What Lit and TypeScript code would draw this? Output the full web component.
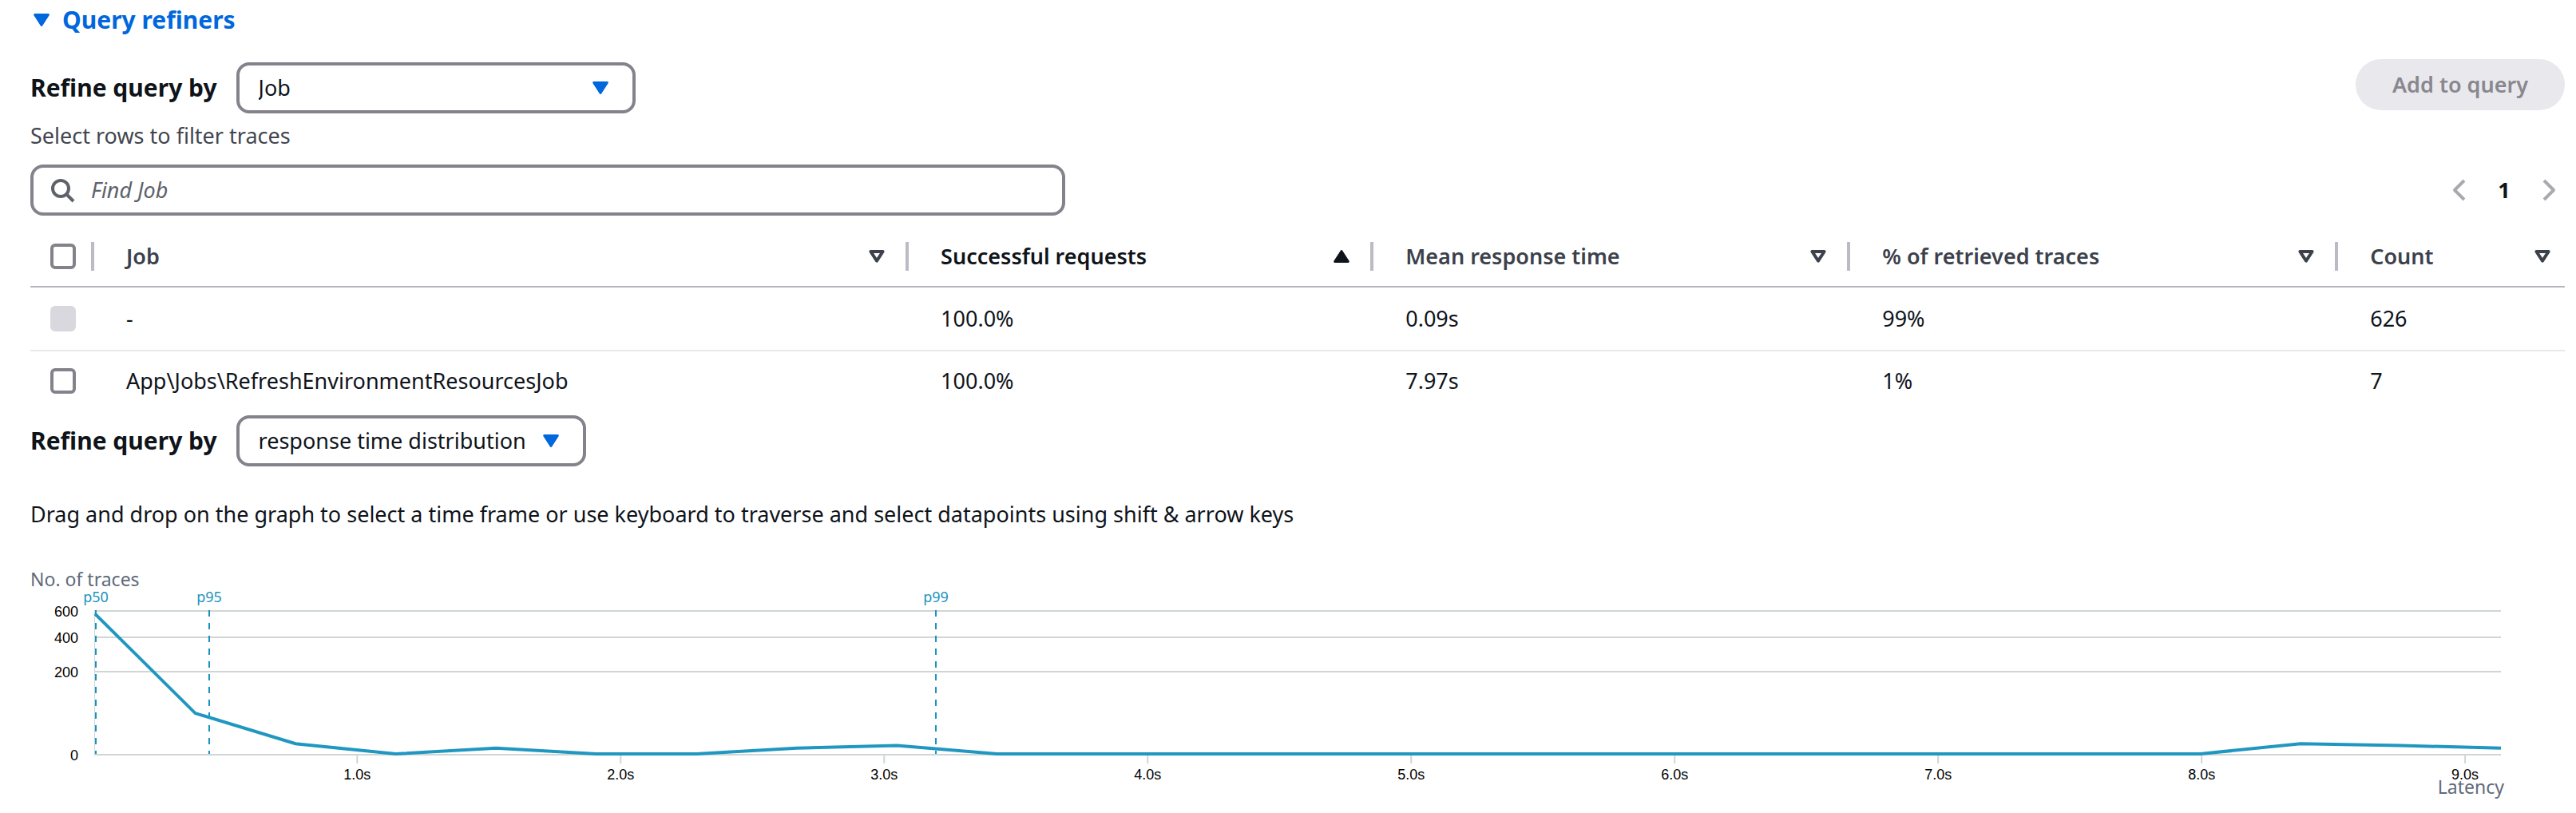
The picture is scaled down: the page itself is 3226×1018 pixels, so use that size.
import { LitElement, html, svg, css } from "lit";
import { customElement, property, state } from "lit/decorators.js";
import { classMap } from "lit/directives/class-map.js";

type SortDirection = "none" | "ascending";

interface Column {
  key: keyof JobRow;
  label: string;
  width: string;
  sort: SortDirection;
}

interface JobRow {
  job: string;
  success: string;
  mean: string;
  share: string;
  count: string;
  disabled: boolean;
}

const COLUMNS: Column[] = [
  { key: "job", label: "Job", width: "32.14%", sort: "none" },
  { key: "success", label: "Successful requests", width: "18.34%", sort: "ascending" },
  { key: "mean", label: "Mean response time", width: "18.81%", sort: "none" },
  { key: "share", label: "% of retrieved traces", width: "19.25%", sort: "none" },
  { key: "count", label: "Count", width: "auto", sort: "none" },
];

const ROWS: JobRow[] = [
  { job: "-", success: "100.0%", mean: "0.09s", share: "99%", count: "626", disabled: true },
  {
    job: "App\\Jobs\\RefreshEnvironmentResourcesJob",
    success: "100.0%",
    mean: "7.97s",
    share: "1%",
    count: "7",
    disabled: false,
  },
];

const caretDown = html`<svg class="caret" viewBox="0 0 20 16" aria-hidden="true">
  <path d="M1.6 1.4h16.8L10 14.6z" fill="currentColor" stroke="currentColor" stroke-width="2.8" stroke-linejoin="round" />
</svg>`;

const caretDownOutline = html`<svg class="caret" viewBox="0 0 20 16" aria-hidden="true">
  <path d="M2.4 2h15.2L10 13.6z" fill="none" stroke="currentColor" stroke-width="4" stroke-linejoin="round" />
</svg>`;

const caretUp = html`<svg class="caret" viewBox="0 0 20 16" aria-hidden="true">
  <path d="M1.6 14.6h16.8L10 1.4z" fill="currentColor" stroke="currentColor" stroke-width="2.8" stroke-linejoin="round" />
</svg>`;

/** Latency histogram on a square-root count scale with percentile markers. */
@customElement("latency-chart")
export class LatencyChart extends LitElement {
  @property({ attribute: false }) counts: number[] = [
    570, 48, 3, 0, 1, 0, 0, 1, 2, 0, 0, 0, 0, 0, 0, 0, 0, 0, 0, 0, 0, 0, 3, 2, 1,
  ];

  private readonly firstSecond = 0.005;
  private readonly lastSecond = 9.136;
  private readonly plotTop = 23;
  private readonly plotHeight = 180;
  private readonly maxCount = 600;

  static styles = css`
    :host {
      display: block;
    }
    .axis-title {
      color: #5f6b7a;
      font-size: 23px;
      line-height: 32px;
    }
    .canvas {
      display: block;
      overflow: visible;
      box-sizing: border-box;
      width: calc(100% - 161px);
      height: 260px;
      margin-left: 81px;
    }
    .series {
      overflow: visible;
    }
    .series polyline {
      fill: none;
      stroke: #2097c1;
      stroke-width: 4px;
      vector-effect: non-scaling-stroke;
    }
    .grid {
      fill: #d0d5d5;
    }
    .tick {
      stroke: #d0d5d5;
      stroke-width: 2px;
    }
    .marker {
      stroke: #1b92bd;
      stroke-width: 2px;
      stroke-dasharray: 8 8;
    }
    .marker-label {
      fill: #1b92bd;
      font-size: 18px;
      text-anchor: middle;
    }
    .tick-label {
      fill: #000000;
      font-family: "Liberation Sans", Helvetica, Arial, sans-serif;
      font-size: 18px;
      text-anchor: middle;
    }
    .count-label {
      text-anchor: end;
    }
    .latency-label {
      fill: #5f6b7a;
      font-size: 23px;
      text-anchor: end;
    }
  `;

  private percent(seconds: number): string {
    return `${((seconds - this.firstSecond) / (this.lastSecond - this.firstSecond)) * 100}%`;
  }

  private height(count: number): number {
    return Math.sqrt(count / this.maxCount) * this.plotHeight;
  }

  render() {
    const base = this.plotTop + this.plotHeight;
    const points = this.counts.map((c, i) => `${i},${this.plotHeight - this.height(c)}`).join(" ");
    const markers = [
      { label: "p50", at: 0.008 },
      { label: "p95", at: 0.4384 },
      { label: "p99", at: 3.1962 },
    ];
    return html`
      <div class="axis-title">No. of traces</div>
      <svg class="canvas" role="img" aria-label="Response time distribution">
        ${[600, 400, 200, 0].map((count) => {
          const y = Math.round(base - this.height(count));
          return svg`
            <rect class="grid" x="0" y=${y} width="100%" height="2" />
            <text class="tick-label count-label" x="-21" y=${y + 8}>${count}</text>`;
        })}
        <rect class="grid" x="-1" y=${this.plotTop} width="1" height=${this.plotHeight + 2} />
        ${[1, 2, 3, 4, 5, 6, 7, 8, 9].map(
          (s) => svg`
            <line class="tick" x1=${this.percent(s)} x2=${this.percent(s)} y1=${base + 2} y2=${base + 12} />
            <text class="tick-label" x=${this.percent(s)} y=${base + 32}>${s}.0s</text>`
        )}
        ${markers.map(
          (m) => svg`
            <line class="marker" x1=${this.percent(m.at)} x2=${this.percent(m.at)}
              y1=${this.plotTop} y2=${base} />
            <text class="marker-label" x=${this.percent(m.at)} y="13">${m.label}</text>`
        )}
        <svg class="series" x="0" y=${this.plotTop} width="100%" height=${this.plotHeight}
          viewBox="0 0 ${this.counts.length - 1} ${this.plotHeight}" preserveAspectRatio="none">
          <polyline points=${points} />
        </svg>
        <text class="latency-label" x="100%" dx="4" y=${base + 50}>Latency</text>
      </svg>
    `;
  }
}

@customElement("app-root")
export class AppRoot extends LitElement {
  @state() private expanded = true;

  static styles = css`
    :host {
      display: block;
      box-sizing: border-box;
      padding: 5px 14px 0 38px;
      background: #ffffff;
      color: #0f141a;
      font-family: "Noto Sans", "Open Sans", sans-serif;
      font-size: 27px;
      line-height: 40px;
    }
    button,
    input,
    select {
      margin: 0;
      font: inherit;
      color: inherit;
    }
    .plain {
      display: flex;
      align-items: center;
      padding: 0;
      border: 0;
      background: none;
      cursor: pointer;
    }
    .caret {
      display: block;
      flex: none;
      width: 20px;
      height: 16px;
      overflow: visible;
    }
    .title {
      gap: 16px;
      padding-left: 4px;
      color: #0067dc;
      font-size: 30px;
      font-weight: 700;
    }
    .toolbar {
      display: flex;
      justify-content: space-between;
      align-items: flex-start;
      margin-top: 29px;
    }
    .refine {
      display: flex;
      align-items: center;
      gap: 24px;
    }
    .toolbar .refine {
      padding-top: 4px;
    }
    .refine-label {
      font-size: 30px;
      font-weight: 700;
    }
    .select {
      display: grid;
      align-items: center;
    }
    .select select {
      grid-area: 1 / 1;
      box-sizing: border-box;
      height: 64px;
      padding: 0 70px 0 24px;
      border: 4px solid #84838b;
      border-radius: 16px;
      background: #ffffff;
      appearance: none;
    }
    .select .caret {
      grid-area: 1 / 1;
      justify-self: end;
      margin-right: 34px;
      color: #0067dc;
      pointer-events: none;
    }
    .wide select {
      width: 500px;
    }
    .add {
      height: 64px;
      padding: 0 46px;
      border: 0;
      border-radius: 32px;
      background: #e9e8ed;
      color: #88878f;
      font-weight: 600;
    }
    .hint {
      margin-top: 8px;
      color: #424650;
    }
    .filters {
      display: flex;
      justify-content: space-between;
      align-items: center;
      margin-top: 16px;
    }
    .search {
      display: flex;
      align-items: center;
      gap: 20px;
      box-sizing: border-box;
      width: 1296px;
      height: 64px;
      padding: 0 20px;
      border: 4px solid #84838b;
      border-radius: 16px;
      color: #5f626b;
    }
    .search svg {
      flex: none;
      width: 32px;
      height: 32px;
    }
    .search input {
      flex: 1;
      min-width: 0;
      padding: 0;
      border: 0;
      outline: 0;
      background: none;
      color: #0f141a;
    }
    .search input::placeholder {
      color: #5f626b;
      font-style: italic;
      opacity: 1;
    }
    .pages {
      display: flex;
      align-items: center;
      gap: 24px;
      padding-right: 4px;
    }
    .arrow {
      color: #aaa9b0;
    }
    .pages svg {
      display: block;
      width: 32px;
      height: 32px;
    }
    .page {
      justify-content: center;
      width: 32px;
      font-weight: 700;
    }
    table {
      width: 100%;
      margin-top: 14px;
      table-layout: fixed;
      border-collapse: separate;
      border-spacing: 0;
      text-align: left;
    }
    .col-check {
      width: 80px;
    }
    th,
    td {
      box-sizing: border-box;
      padding: 0;
    }
    th {
      height: 76px;
      border-bottom: 2px solid #b6b6be;
      color: #3c414b;
      font-weight: 600;
    }
    th.sorted {
      color: #0f141a;
    }
    td {
      height: 80px;
      padding-left: 40px;
      border-bottom: 2px solid #e8e7ed;
    }
    tr:last-child td {
      height: 74px;
      border-bottom: 0;
    }
    .head {
      display: flex;
      align-items: center;
      box-sizing: border-box;
      height: 36px;
      border-right: 4px solid #bbbac5;
    }
    th:last-child .head {
      padding-right: 18px;
      border-right: 0;
    }
    .sort {
      flex: 1;
      justify-content: space-between;
      padding: 0 26px 0 40px;
    }
    th:last-child .sort {
      padding-right: 0;
    }
    td.pick,
    .head.pick {
      padding-left: 25px;
    }
    .box {
      display: block;
      box-sizing: border-box;
      width: 32px;
      height: 32px;
      border: 4px solid #84838b;
      border-radius: 6px;
      background: #ffffff;
      appearance: none;
    }
    .box:checked {
      border-color: #0067dc;
      background: #0067dc;
    }
    .box:disabled {
      border-color: #d9d8df;
      background: #d9d8df;
    }
    .second {
      margin-top: 6px;
    }
    .note {
      margin: 40px 0 45px;
    }
  `;

  private toggle() {
    this.expanded = !this.expanded;
  }

  private renderTable() {
    return html`
      <table>
        <colgroup>
          <col class="col-check" />
          ${COLUMNS.map((c) => html`<col style="width: ${c.width}" />`)}
        </colgroup>
        <thead>
          <tr>
            <th scope="col">
              <div class="head pick"><input class="box" type="checkbox" aria-label="Select all rows" /></div>
            </th>
            ${COLUMNS.map(
              (c) => html`
                <th scope="col" aria-sort=${c.sort} class=${classMap({ sorted: c.sort !== "none" })}>
                  <div class="head">
                    <button class="plain sort" type="button">
                      <span>${c.label}</span>${c.sort === "none" ? caretDownOutline : caretUp}
                    </button>
                  </div>
                </th>
              `
            )}
          </tr>
        </thead>
        <tbody>
          ${ROWS.map(
            (row) => html`
              <tr>
                <td class="pick">
                  <input class="box" type="checkbox" aria-label="Select ${row.job}" ?disabled=${row.disabled} />
                </td>
                ${COLUMNS.map((c) => html`<td>${row[c.key]}</td>`)}
              </tr>
            `
          )}
        </tbody>
      </table>
    `;
  }

  private renderContent() {
    return html`
      <div class="toolbar">
        <div class="refine">
          <label class="refine-label" for="dimension">Refine query by</label>
          <div class="select wide">
            <select id="dimension">
              <option>Job</option>
            </select>
            ${caretDown}
          </div>
        </div>
        <button class="add" type="button" disabled>Add to query</button>
      </div>
      <div class="hint">Select rows to filter traces</div>
      <div class="filters">
        <label class="search">
          <svg viewBox="0 0 16 16" fill="none" stroke="currentColor" stroke-width="2" aria-hidden="true">
            <circle cx="7" cy="7" r="5" />
            <path d="m10.5 10.5 4.5 4.5" />
          </svg>
          <input type="search" placeholder="Find Job" aria-label="Find Job" />
        </label>
        <nav class="pages" aria-label="Pagination">
          <button class="plain arrow" type="button" disabled aria-label="Previous page">
            <svg viewBox="0 0 16 16" fill="none" stroke="currentColor" stroke-width="2" stroke-linejoin="round">
              <path d="M11 2 5 8l6 6" />
            </svg>
          </button>
          <button class="plain page" type="button" aria-current="page">
            <span>1</span>
          </button>
          <button class="plain arrow" type="button" disabled aria-label="Next page">
            <svg viewBox="0 0 16 16" fill="none" stroke="currentColor" stroke-width="2" stroke-linejoin="round">
              <path d="m5 2 6 6-6 6" />
            </svg>
          </button>
        </nav>
      </div>
      ${this.renderTable()}
      <div class="refine second">
        <label class="refine-label" for="distribution">Refine query by</label>
        <div class="select">
          <select id="distribution">
            <option>response time distribution</option>
          </select>
          ${caretDown}
        </div>
      </div>
      <p class="note">
        Drag and drop on the graph to select a time frame or use keyboard to traverse and select datapoints using shift
        &amp; arrow keys
      </p>
      <latency-chart></latency-chart>
    `;
  }

  render() {
    return html`
      <button class="plain title" type="button" aria-expanded=${this.expanded} @click=${this.toggle}>
        ${caretDown}<span>Query refiners</span>
      </button>
      ${this.expanded ? this.renderContent() : null}
    `;
  }
}
